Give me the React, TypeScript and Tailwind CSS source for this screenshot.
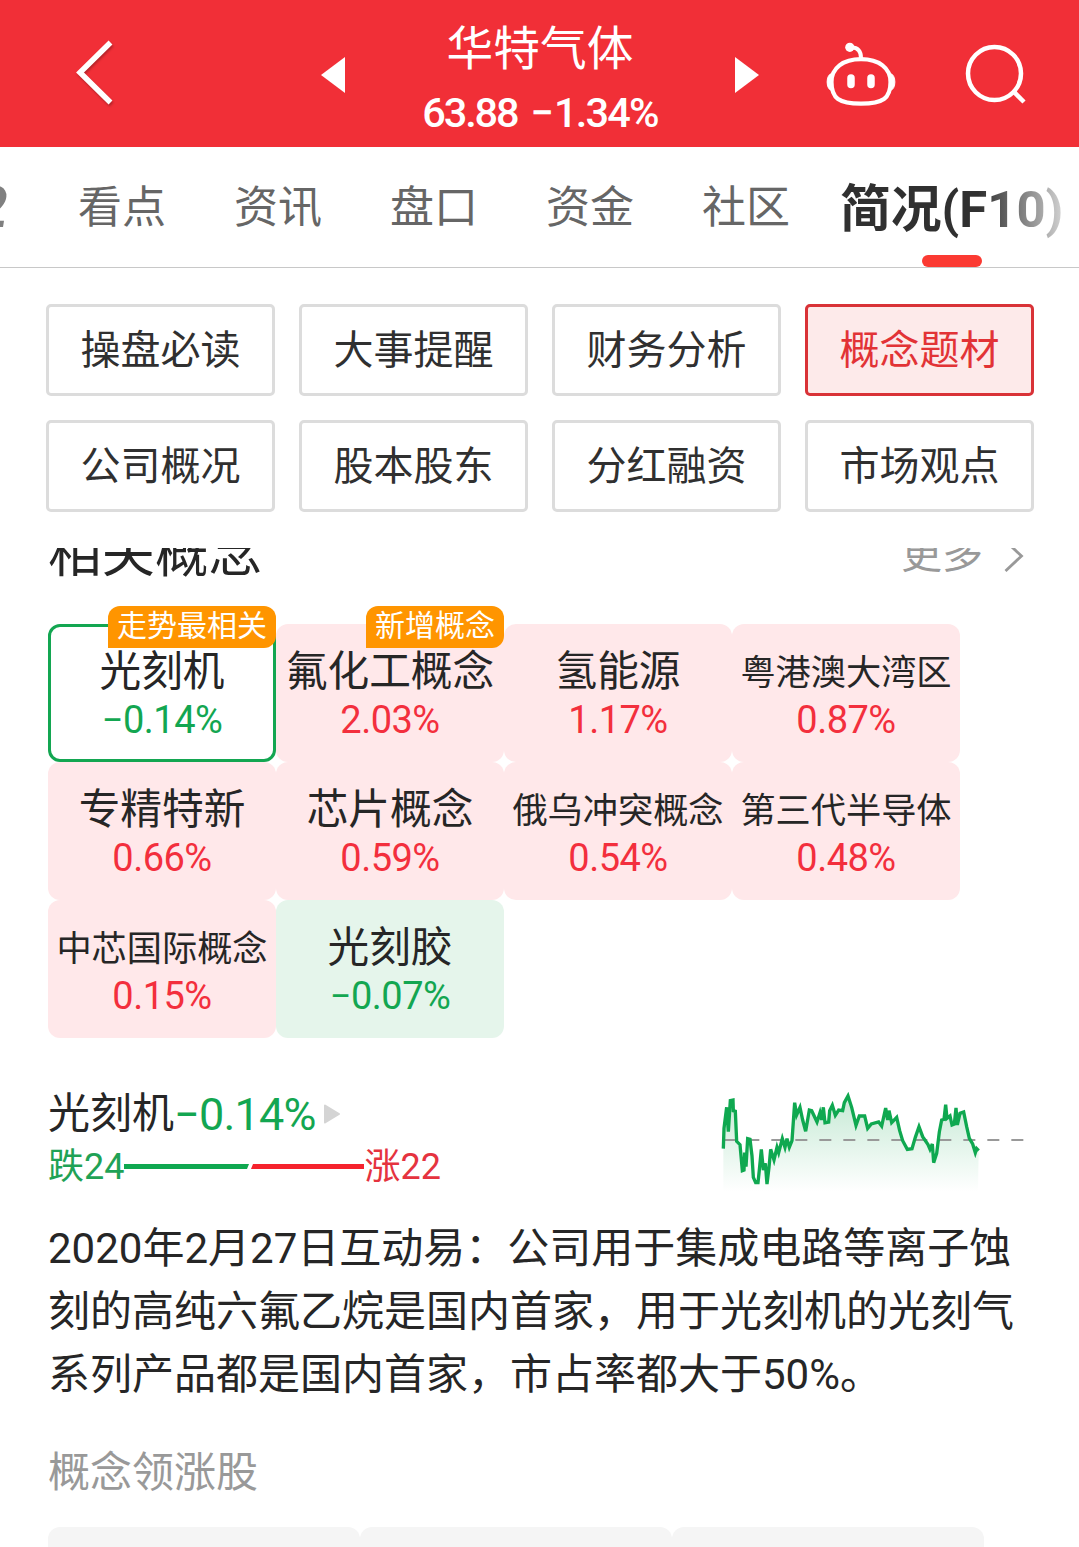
import React from "react";

const tabs = ["看点", "资讯", "盘口", "资金", "社区"];

const sections = [
  "操盘必读", "大事提醒", "财务分析", "概念题材",
  "公司概况", "股本股东", "分红融资", "市场观点",
];

type Concept = { name: string; pct: string; badge?: string; selected?: boolean };

const concepts: Concept[] = [
  { name: "光刻机", pct: "−0.14%", badge: "走势最相关", selected: true },
  { name: "氟化工概念", pct: "2.03%", badge: "新增概念" },
  { name: "氢能源", pct: "1.17%" },
  { name: "粤港澳大湾区", pct: "0.87%" },
  { name: "专精特新", pct: "0.66%" },
  { name: "芯片概念", pct: "0.59%" },
  { name: "俄乌冲突概念", pct: "0.54%" },
  { name: "第三代半导体", pct: "0.48%" },
  { name: "中芯国际概念", pct: "0.15%" },
  { name: "光刻胶", pct: "−0.07%" },
];

function Header() {
  return (
    <header className="flex h-[147px] shrink-0 items-start bg-[#f12f37] text-white">
      <svg className="ml-[70px] mt-[36px] h-[72px] w-[50px] drop-shadow-[1px_2px_1px_rgba(0,0,0,0.25)]" viewBox="70 36 50 72" fill="none">
        <path d="M110.500 42.500L80 72.500L110.500 102.500" stroke="currentColor" strokeWidth="5.500" />
      </svg>
      <svg className="ml-[201px] mt-[57px] h-[36px] w-[24px]" viewBox="0 0 24 36">
        <path d="M24 0V36L0 18Z" fill="currentColor" />
      </svg>
      <div className="flex w-[390px] flex-col items-center">
        <div className="mt-[19px] h-[60px] text-[46.700px] leading-[60px]">华特气体</div>
        <div className="mt-[10px] flex h-[48px] text-[41.500px] font-medium leading-[48px]">
          <span className="tracking-[-2.1px]">63.88</span>
          <span className="ml-[13px]">−</span>
          <span className="tracking-[-1.8px]">1.34%</span>
        </div>
      </div>
      <svg className="mt-[57px] h-[36px] w-[24px]" viewBox="0 0 24 36">
        <path d="M0 0V36L24 18Z" fill="currentColor" />
      </svg>
      <svg className="ml-[64px] mt-[38.500px] h-[70px] w-[76px]" viewBox="823 38 76 70" fill="none" stroke="currentColor">
        <path d="M861 58.200C879 58.200 890.500 67 890.500 81C890.500 97.500 883 102.600 861 102.600C839 102.600 831.500 97.500 831.500 81C831.500 67 843 58.200 861 58.200Z" strokeWidth="4.200" />
        <path d="M852 46.500C857.500 46.500 861 50 861 57" strokeWidth="4" />
        <circle cx="849.800" cy="46.300" r="4.600" fill="currentColor" stroke="none" />
        <path d="M832 72.500C825.500 73 825.500 89 832 89.500ZM890 72.500C896.500 73 896.500 89 890 89.500Z" fill="currentColor" strokeWidth="1" />
        <path d="M851 77V83.500M871 77V83.500" strokeWidth="7.500" strokeLinecap="round" />
      </svg>
      <svg className="ml-[61px] mt-[40px] h-[68px] w-[70px]" viewBox="960 40 70 68" fill="none" stroke="currentColor">
        <circle cx="994.500" cy="73.500" r="26.500" strokeWidth="4.500" />
        <path d="M1013.500 91.500L1024 102" strokeWidth="4.500" />
      </svg>
    </header>
  );
}

function TabBar() {
  return (
    <nav className="relative flex h-[121px] shrink-0 items-start overflow-hidden border-b border-[#c8c8c8] bg-white">
      <span className="-ml-[24px] mt-[29px] w-[32px] text-[57px] font-bold italic leading-[64px] text-[#808080]">2</span>
      <div className="ml-[70px] mt-[29px] flex gap-[68px]">
        {tabs.map((t) => (
          <span key={t} className="w-[88px] whitespace-nowrap text-[44px] leading-[64px] text-[#666]">{t}</span>
        ))}
      </div>
      <span className="ml-[50px] mt-[29px] whitespace-nowrap bg-linear-to-r from-[#303030] from-62% to-[#d3d3d3] to-100% bg-clip-text text-[50.800px] font-bold leading-[68px] text-transparent">简况(F10)</span>
      <span className="absolute bottom-0 left-[922px] h-[12px] w-[60px] rounded-full bg-[#fb3a32]" />
    </nav>
  );
}

function Sections() {
  return (
    <div className="grid grid-cols-[repeat(4,229px)] gap-[24px] pl-[46px] pt-[36px]">
      {sections.map((s, i) => (
        <button
          key={s}
          className={
            "h-[92px] rounded-[5px] border-[3px] pt-[1px] text-[40px] leading-[58px] " +
            (i === 3 ? "border-[#d93237] bg-[#fdeaea] text-[#e23336]" : "border-[#dcdcdc] bg-white text-[#303030]")
          }
        >
          {s}
        </button>
      ))}
    </div>
  );
}

function ConceptCard({ c }: { c: Concept }) {
  const down = c.pct.startsWith("−");
  const bg = c.selected ? "border-[3px] border-[#13a651] bg-white" : down ? "bg-[#e5f5eb]" : "bg-[#ffe8ea]";
  return (
    <div className={"relative h-[138px] rounded-[12px] " + bg}>
      <div className={"flex flex-col items-center " + (c.selected ? "pt-[15px]" : "pt-[18px]")}>
        <div className={"h-[60px] whitespace-nowrap text-[#262626] " + (c.name.length > 5 ? "text-[35.200px] leading-[62px]" : "text-[41.700px] leading-[60px]")}>{c.name}</div>
        <div className={"-mt-[5px] h-[46px] text-[38px] leading-[46px] tracking-[-0.5px] " + (down ? "text-[#13a651]" : "text-[#f32f3d]")}>{c.pct}</div>
      </div>
      {c.badge && (
        <span className={"absolute h-[42px] whitespace-nowrap rounded-[12px] rounded-bl-none bg-[#ff9500] px-[9px] text-[30px] leading-[40px] text-white " + (c.selected ? "-right-[3px] -top-[21px]" : "right-0 -top-[18px]")}>
          {c.badge}
        </span>
      )}
    </div>
  );
}

const trend =
  "70,236 72,175 80,112 85,185 91,92 99,90 100,122 106,124 110,214 120,224 127,302 132,300 134,248 138,290 143,206 150,208 156,258 160,322 167,338 174,338 178,300 184,238 190,300 196,280 201,342 207,292 212,238 222,270 231,232 236,248 247,206 255,232 261,206 268,232 276,212 284,98 290,135 300,112 308,150 317,184 328,120 335,122 351,156 360,128 365,150 370,112 375,158 386,156 389,122 397,106 406,136 416,120 428,122 433,98 444,78 455,112 468,166 478,138 494,138 503,175 514,162 536,156 545,168 557,114 563,150 567,122 575,158 590,142 599,182 608,212 622,238 636,236 646,202 657,170 668,200 684,224 690,238 697,222 701,278 710,250 718,186 725,150 732,148 737,104 741,145 750,138 756,165 763,162 768,114 772,165 780,130 791,126 800,170 808,205 818,222 826,248 830,236 836,242";

function Trend() {
  return (
    <svg className="h-[140px] w-[350px]" viewBox="0 0 1050 420" fill="none">
      <defs>
        <linearGradient id="trend-fill" x1="0" y1="80" x2="0" y2="365" gradientUnits="userSpaceOnUse">
          <stop offset="0" stopColor="#13a651" stopOpacity="0.24" />
          <stop offset="1" stopColor="#13a651" stopOpacity="0" />
        </linearGradient>
      </defs>
      <polygon points={trend + " 834,365 70,365"} fill="url(#trend-fill)" />
      <path d="M70 210H970" stroke="#999" strokeWidth="6" strokeDasharray="36 36" />
      <polyline points={trend} stroke="#0fa850" strokeWidth="10" />
    </svg>
  );
}

export default function App() {
  return (
    <div className="flex h-[1547px] w-[1079px] flex-col overflow-hidden bg-white font-[Roboto,'Noto_Sans_CJK_SC',sans-serif]">
      <Header />
      <TabBar />
      <Sections />
      <div className="mt-[36px] flex h-[58px] shrink-0 items-start justify-between overflow-hidden pl-[48px] pr-[54px]">
        <h2 className="-mt-[30px] text-[53.500px] font-normal leading-[72px] text-[#262626]">相关概念</h2>
        <div className="-mt-[24px] flex items-center text-[41px] leading-[60px] text-[#999]">
          更多
          <svg className="ml-[20px] mt-[3px] h-[34px] w-[22px]" viewBox="0 0 22 34" fill="none">
            <path d="M2.500 2L18.500 17L2.500 32" stroke="currentColor" strokeWidth="2.800" />
          </svg>
        </div>
      </div>
      <div className="mt-[18px] grid shrink-0 grid-cols-[repeat(4,228px)] pl-[48px]">
        {concepts.map((c) => (
          <ConceptCard key={c.name} c={c} />
        ))}
      </div>
      <div className="mt-[32px] flex h-[140px] shrink-0 justify-between pl-[48px] pr-[29px]">
        <div>
          <div className="mt-[13px] flex h-[62px] items-center">
            <span className="text-[42px] leading-[62px] text-[#262626]">光刻机</span>
            <span className="mt-[2px] text-[45px] leading-[62px] tracking-[-0.8px] text-[#13a651]">−0.14%</span>
            <svg className="ml-[7px] h-[20px] w-[18px]" viewBox="0 0 18 20">
              <path d="M2 1.500L16 10L2 18.500Z" fill="#d4d4d4" stroke="#d4d4d4" strokeWidth="2" strokeLinejoin="round" />
            </svg>
          </div>
          <div className="-mt-[2px] flex h-[48px] items-center text-[36px] leading-[48px]">
            <span className="text-[#1fa256]">跌24</span>
            <svg className="-mt-[2px] h-[5px] w-[240px]" viewBox="0 0 240 5">
              <path d="M0 0H125L123 5H0Z" fill="#0fa850" />
              <path d="M129 0H240V5H127Z" fill="#f5222d" />
            </svg>
            <span className="text-[#e5333f]">涨22</span>
          </div>
        </div>
        <Trend />
      </div>
      <p className="ml-[48px] mt-[7px] shrink-0 whitespace-nowrap text-[42px] leading-[63px] text-[#262626]">
        2020年2月27日互动易：公司用于集成电路等离子蚀
        <br />
        刻的高纯六氟乙烷是国内首家，用于光刻机的光刻气
        <br />
        系列产品都是国内首家，市占率都大于50%。
      </p>
      <h3 className="ml-[48px] mt-[36px] h-[62px] shrink-0 text-[42px] leading-[62px] text-[#999]">概念领涨股</h3>
      <div className="mt-[23px] grid shrink-0 grid-cols-[repeat(3,312px)] pl-[48px]">
        <div className="h-[90px] rounded-[12px] bg-[#f5f5f5]" />
        <div className="h-[90px] rounded-[12px] bg-[#f5f5f5]" />
        <div className="h-[90px] rounded-[12px] bg-[#f5f5f5]" />
      </div>
    </div>
  );
}
